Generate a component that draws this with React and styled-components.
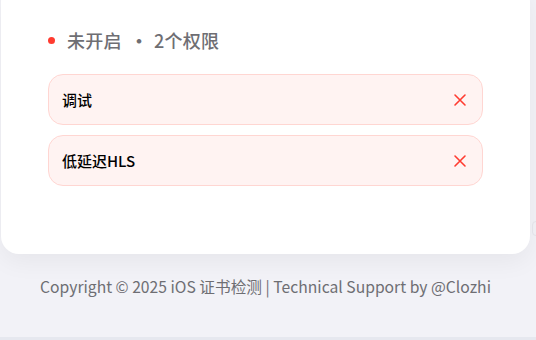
import React from "react";
import styled, { createGlobalStyle } from "styled-components";

const GlobalStyle = createGlobalStyle`
  html, body {
    margin: 0;
    padding: 0;
    background: #f2f2f7;
    font-family: "Noto Sans CJK SC", "Noto Sans", sans-serif;
  }
`;

const permissions = ["调试", "低延迟HLS"];

export default function App() {
  return (
    <>
      <GlobalStyle />
      <Page>
        <Card>
          <Status>
            <Dot />
            <StatusText>未开启</StatusText>
            <Sep>·</Sep>
            <StatusText>2个权限</StatusText>
          </Status>
          <List>
            {permissions.map((p) => (
              <Pill key={p}>
                <PillLabel>{p}</PillLabel>
                <CloseIcon />
              </Pill>
            ))}
          </List>
        </Card>
        <Footer>Copyright © 2025 iOS 证书检测 | Technical Support by @Clozhi</Footer>
        <EdgeTab />
      </Page>
    </>
  );
}

function CloseIcon() {
  return (
    <IconWrap>
      <svg width="14" height="14" viewBox="0 0 14 14">
        <path
          d="M2 2 L12 12 M12 2 L2 12"
          stroke="#ff3b30"
          strokeWidth="1.6"
          strokeLinecap="round"
          fill="none"
        />
      </svg>
    </IconWrap>
  );
}

const Page = styled.div`
  position: relative;
  height: 340px;
  box-sizing: border-box;
  overflow: hidden;
  padding-left: 1px;
  padding-right: 6px;
  border-bottom: 3px solid #e6e8ef;
  background: #f2f2f7;
`;

const Card = styled.div`
  margin-top: -16px;
  padding: 44px 47px 68px;
  background: #fff;
  border-radius: 18px;
  box-shadow: 0 8px 24px rgba(0, 0, 0, 0.05);
`;

const Status = styled.div`
  display: flex;
  align-items: center;
  height: 24px;
  margin-bottom: 22px;
`;

const Dot = styled.span`
  width: 7px;
  height: 7px;
  border-radius: 50%;
  background: #ff3b30;
  margin-right: 12px;
`;

const StatusText = styled.span`
  font-size: 18px;
  font-weight: 500;
  letter-spacing: 0.3px;
  color: #6e6e73;
  line-height: 24px;
`;

const Sep = styled.span`
  font-size: 18px;
  font-weight: 700;
  color: #6e6e73;
  margin: 0 6px 0 8px;
`;

const List = styled.div`
  display: flex;
  flex-direction: column;
  gap: 10px;
`;

const Pill = styled.div`
  display: flex;
  align-items: center;
  justify-content: space-between;
  height: 51px;
  box-sizing: border-box;
  padding: 0 15px 0 13px;
  background: #fff3f2;
  border: 1px solid #ffd6d2;
  border-radius: 15px;
`;

const PillLabel = styled.span`
  font-size: 15px;
  font-weight: 500;
  color: #000;
`;

const IconWrap = styled.span`
  display: flex;
  align-items: center;
  justify-content: center;
`;

const Footer = styled.div`
  padding-top: 22px;
  text-align: center;
  font-size: 15.7px;
  line-height: 22px;
  color: #6e6e73;
`;

const EdgeTab = styled.div`
  position: absolute;
  left: 532px;
  top: 221px;
  width: 20px;
  height: 13px;
  border: 1px solid #e2e2e8;
  border-radius: 4px;
`;
